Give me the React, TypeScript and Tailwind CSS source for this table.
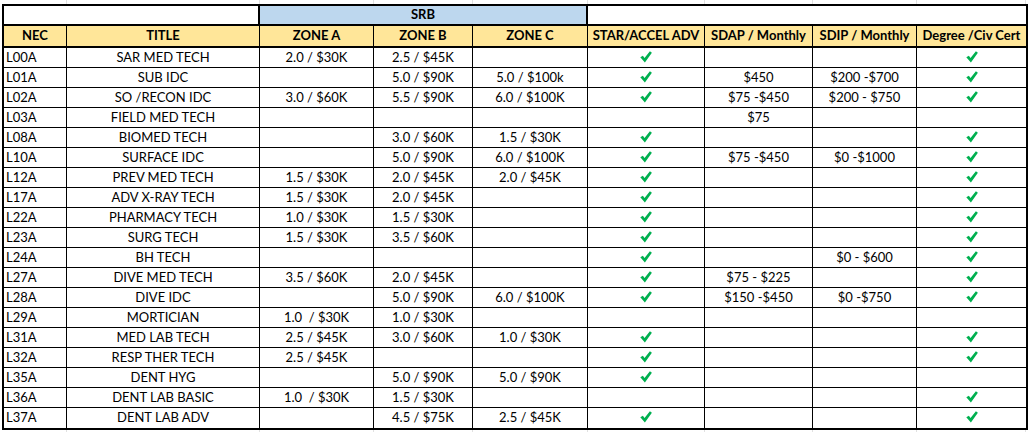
import React from "react";

type Row = {
  nec: string;
  title: string;
  a?: string;
  b?: string;
  c?: string;
  star?: boolean;
  sdap?: string;
  sdip?: string;
  degree?: boolean;
};

const rows: Row[] = [
  { nec: "L00A", title: "SAR MED TECH", a: "2.0 / $30K", b: "2.5 / $45K", star: true, degree: true },
  { nec: "L01A", title: "SUB IDC", b: "5.0 / $90K", c: "5.0 / $100k", star: true, sdap: "$450", sdip: "$200 -$700", degree: true },
  { nec: "L02A", title: "SO /RECON IDC", a: "3.0 / $60K", b: "5.5 / $90K", c: "6.0 / $100K", star: true, sdap: "$75 -$450", sdip: "$200 - $750", degree: true },
  { nec: "L03A", title: "FIELD MED TECH", sdap: "$75" },
  { nec: "L08A", title: "BIOMED TECH", b: "3.0 / $60K", c: "1.5 / $30K", star: true, degree: true },
  { nec: "L10A", title: "SURFACE IDC", b: "5.0 / $90K", c: "6.0 / $100K", star: true, sdap: "$75 -$450", sdip: "$0 -$1000", degree: true },
  { nec: "L12A", title: "PREV MED TECH", a: "1.5 / $30K", b: "2.0 / $45K", c: "2.0 / $45K", star: true, degree: true },
  { nec: "L17A", title: "ADV X-RAY TECH", a: "1.5 / $30K", b: "2.0 / $45K", star: true, degree: true },
  { nec: "L22A", title: "PHARMACY TECH", a: "1.0 / $30K", b: "1.5 / $30K", star: true, degree: true },
  { nec: "L23A", title: "SURG TECH", a: "1.5 / $30K", b: "3.5 / $60K", star: true, degree: true },
  { nec: "L24A", title: "BH TECH", star: true, sdip: "$0 - $600", degree: true },
  { nec: "L27A", title: "DIVE MED TECH", a: "3.5 / $60K", b: "2.0 / $45K", star: true, sdap: "$75 - $225", degree: true },
  { nec: "L28A", title: "DIVE IDC", b: "5.0 / $90K", c: "6.0 / $100K", star: true, sdap: "$150 -$450", sdip: "$0 -$750", degree: true },
  { nec: "L29A", title: "MORTICIAN", a: "1.0\u00a0 / $30K", b: "1.0 / $30K" },
  { nec: "L31A", title: "MED LAB TECH", a: "2.5 / $45K", b: "3.0 / $60K", c: "1.0 / $30K", star: true, degree: true },
  { nec: "L32A", title: "RESP THER TECH", a: "2.5 / $45K", star: true, degree: true },
  { nec: "L35A", title: "DENT HYG", b: "5.0 / $90K", c: "5.0 / $90K", star: true },
  { nec: "L36A", title: "DENT LAB BASIC", a: "1.0\u00a0 / $30K", b: "1.5 / $30K", degree: true },
  { nec: "L37A", title: "DENT LAB ADV", b: "4.5 / $75K", c: "2.5 / $45K", star: true, degree: true },
];

const widths = ["w-[63px]", "w-[193px]", "w-[114px]", "w-[99px]", "w-[115px]", "w-[117px]", "w-[108px]", "w-[104px]", "w-[109px]"];

function Check() {
  return (
    <svg width="12" height="12" viewBox="0 0 12 12" className="block -mt-[2px]">
      <path d="M0.3 6.2 L2.9 4.7 L4.5 7.1 L9.9 0.2 L11.9 1.7 L4.9 11.6 Z" fill="#00b050" />
    </svg>
  );
}

function Cell({ i, children, left, last }: { i: number; children?: React.ReactNode; left?: boolean; last?: boolean }) {
  return (
    <div
      className={`${widths[i]} shrink-0 flex items-center h-full overflow-hidden whitespace-nowrap ${
        left ? "justify-start pl-[2px]" : "justify-center"
      } ${last ? "" : "border-r border-black"}`}
    >
      {children}
    </div>
  );
}

export default function App() {
  return (
    <div className="w-[1031px] h-[432px] bg-white overflow-hidden text-[13px] text-black" style={{ fontFamily: "Lato, 'Open Sans', sans-serif" }}>
      {/* faint sheet gridlines above the table */}
      <div className="flex h-[4px] pl-[4px]">
        {widths.map((w, i) => (
          <div key={i} className={`${w} shrink-0 border-r border-[#e1e1e1]`} />
        ))}
      </div>
      <div className="ml-[2px] w-[1026px] border-2 border-black">
        <div className="flex h-[20px] border-b-2 border-black">
          <div className="w-[256px] shrink-0 border-r-2 border-black" />
          <div className="w-[328px] shrink-0 border-r-2 border-black bg-[#bdd7ee] flex items-center justify-center font-bold">
            SRB
          </div>
          <div className="flex-1" />
        </div>
        <div className="flex h-[22px] border-b-2 border-black bg-[#ffe699] font-bold">
          {["NEC", "TITLE", "ZONE A", "ZONE B", "ZONE C", "STAR/ACCEL ADV", "SDAP / Monthly", "SDIP / Monthly", "Degree /Civ Cert"].map((h, i) => (
            <Cell key={h} i={i} last={i === 8}>
              {h}
            </Cell>
          ))}
        </div>
        {rows.map((r, idx) => (
          <div key={r.nec} className={`flex h-[20px] ${idx === rows.length - 1 ? "" : "border-b border-black"}`}>
            <Cell i={0} left>{r.nec}</Cell>
            <Cell i={1}>{r.title}</Cell>
            <Cell i={2}>{r.a}</Cell>
            <Cell i={3}>{r.b}</Cell>
            <Cell i={4}>{r.c}</Cell>
            <Cell i={5}>{r.star && <Check />}</Cell>
            <Cell i={6}>{r.sdap}</Cell>
            <Cell i={7}>{r.sdip}</Cell>
            <Cell i={8} last>{r.degree && <Check />}</Cell>
          </div>
        ))}
      </div>
      <div className="flex h-[4px] pl-[4px]">
        {widths.map((w, i) => (
          <div key={i} className={`${w} shrink-0 border-r border-[#e1e1e1]`} />
        ))}
      </div>
    </div>
  );
}
